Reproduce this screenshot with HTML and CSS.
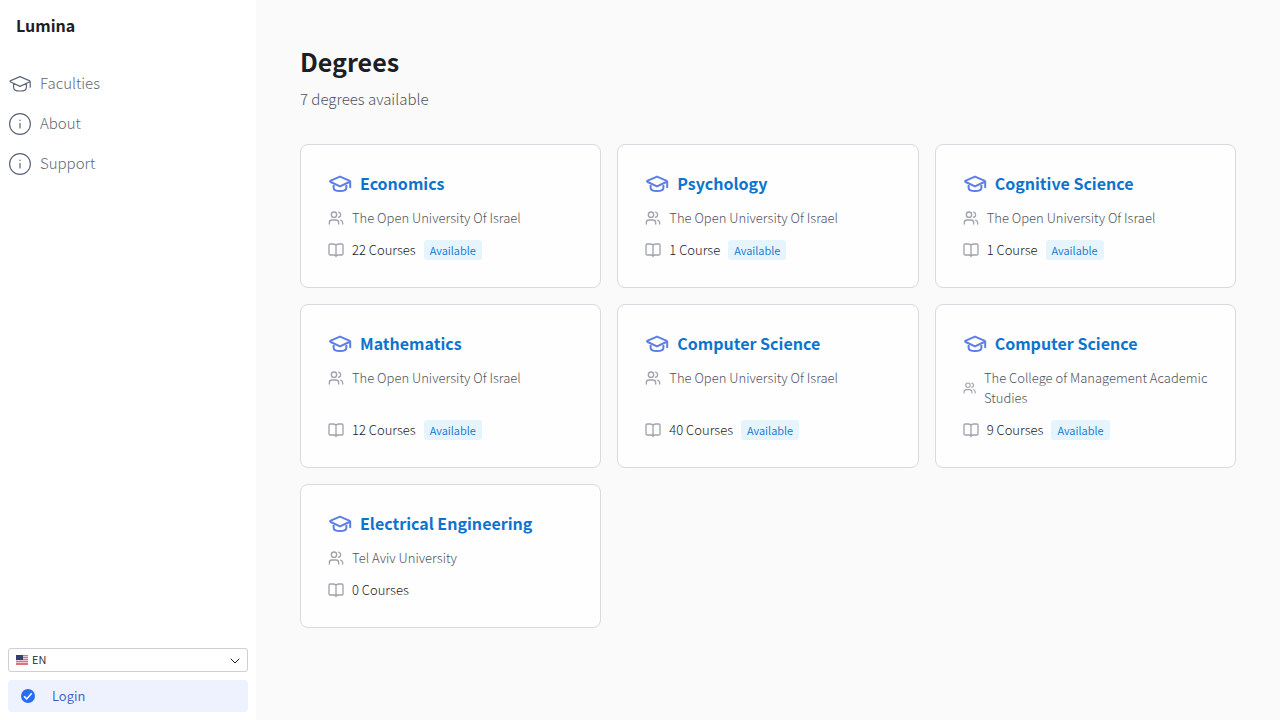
FILE: index.html
```
<!DOCTYPE html>
<html lang="en">
<head>
<meta charset="utf-8">
<meta name="viewport" content="width=device-width, initial-scale=1">
<title>Lumina - Degrees</title>
<link rel="stylesheet" href="styles.css">
</head>
<body>
<svg class="sprite" aria-hidden="true">
  <symbol id="cap" viewBox="0 0 24 24"><path d="M12 4.6 21.3 8.6Q22.6 9.3 21.3 10L12 14.4 2.7 10Q1.4 9.3 2.7 8.6ZM22.2 9.6V15.2M5.6 11.6V15.4C5.6 20.2 18.4 20.2 18.4 15.4V11.6"/></symbol>
  <symbol id="info" viewBox="0 0 24 24"><circle cx="12" cy="12" r="10.4"/><path d="M12 11.4V16M12 8v.6"/></symbol>
  <symbol id="users" viewBox="0 0 24 24"><circle cx="9" cy="7" r="4"/><path d="M16 21v-2a4 4 0 0 0-4-4H6a4 4 0 0 0-4 4v2M22 21v-2a4 4 0 0 0-3-3.87M16 3.13a4 4 0 0 1 0 7.75"/></symbol>
  <symbol id="book" viewBox="0 0 24 24"><path d="M12 5v17M12 5Q11 3 8 3H3.5Q1.5 3 1.5 5V17.5Q1.5 19.5 3.5 19.5H9Q11.5 19.5 12 21Q12.5 19.5 15 19.5H20.5Q22.5 19.5 22.5 17.5V5Q22.5 3 20.5 3H16Q13 3 12 5"/></symbol>
</svg>
<div class="layout">
  <aside class="sidebar">
    <div class="brand">Lumina</div>
    <nav class="nav" aria-label="Main">
      <a href="#faculties"><svg class="icon nav-icon"><use href="#cap"/></svg><span class="label">Faculties</span></a>
      <a href="#about"><svg class="icon nav-icon"><use href="#info"/></svg><span class="label">About</span></a>
      <a href="#support"><svg class="icon nav-icon"><use href="#info"/></svg><span class="label">Support</span></a>
    </nav>
    <div class="sidebar-footer">
      <div class="language">
        <select aria-label="Language"><option>EN</option></select>
        <svg class="flag" viewBox="0 0 12 10" aria-hidden="true"><path fill="#f0c8cc" d="M0 0h12v10H0z"/><path fill="#d9757e" d="M0 0h12v1H0zM0 2h12v1H0zM0 4h12v1H0zM0 6h12v1H0zM0 8h12v2H0z"/><path fill="#2c4270" d="M0 0h7v5H0z"/></svg>
        <svg class="chevron" viewBox="0 0 10 6" aria-hidden="true"><path d="M.7.7 5 5 9.3.7"/></svg>
      </div>
      <button class="login" type="button"><svg viewBox="0 0 16 16" aria-hidden="true"><circle cx="8" cy="8" r="7" fill="#266df0"/><path d="m4 8.2 2.7 2.7 5-5.6" fill="none" stroke="#fff" stroke-width="1.5"/></svg>Login</button>
    </div>
  </aside>
  <main class="main">
    <h1>Degrees</h1>
    <p class="summary">7 degrees available</p>
    <div class="cards">
      <article class="card">
        <h2><svg class="icon cap"><use href="#cap"/></svg><a class="label" href="#d1">Economics</a></h2>
        <p class="school"><svg class="icon small"><use href="#users"/></svg><span>The Open University Of Israel</span></p>
        <p class="courses"><svg class="icon small"><use href="#book"/></svg><span>22 Courses</span><span class="badge">Available</span></p>
      </article>
      <article class="card">
        <h2><svg class="icon cap"><use href="#cap"/></svg><a class="label" href="#d2">Psychology</a></h2>
        <p class="school"><svg class="icon small"><use href="#users"/></svg><span>The Open University Of Israel</span></p>
        <p class="courses"><svg class="icon small"><use href="#book"/></svg><span>1 Course</span><span class="badge">Available</span></p>
      </article>
      <article class="card">
        <h2><svg class="icon cap"><use href="#cap"/></svg><a class="label" href="#d3">Cognitive Science</a></h2>
        <p class="school"><svg class="icon small"><use href="#users"/></svg><span>The Open University Of Israel</span></p>
        <p class="courses"><svg class="icon small"><use href="#book"/></svg><span>1 Course</span><span class="badge">Available</span></p>
      </article>
      <article class="card">
        <h2><svg class="icon cap"><use href="#cap"/></svg><a class="label" href="#d4">Mathematics</a></h2>
        <p class="school"><svg class="icon small"><use href="#users"/></svg><span>The Open University Of Israel</span></p>
        <p class="courses"><svg class="icon small"><use href="#book"/></svg><span>12 Courses</span><span class="badge">Available</span></p>
      </article>
      <article class="card">
        <h2><svg class="icon cap"><use href="#cap"/></svg><a class="label" href="#d5">Computer Science</a></h2>
        <p class="school"><svg class="icon small"><use href="#users"/></svg><span>The Open University Of Israel</span></p>
        <p class="courses"><svg class="icon small"><use href="#book"/></svg><span>40 Courses</span><span class="badge">Available</span></p>
      </article>
      <article class="card">
        <h2><svg class="icon cap"><use href="#cap"/></svg><a class="label" href="#d6">Computer Science</a></h2>
        <p class="school"><svg class="icon small"><use href="#users"/></svg><span>The College of Management Academic Studies</span></p>
        <p class="courses"><svg class="icon small"><use href="#book"/></svg><span>9 Courses</span><span class="badge">Available</span></p>
      </article>
      <article class="card">
        <h2><svg class="icon cap"><use href="#cap"/></svg><a class="label" href="#d7">Electrical Engineering</a></h2>
        <p class="school"><svg class="icon small"><use href="#users"/></svg><span>Tel Aviv University</span></p>
        <p class="courses"><svg class="icon small"><use href="#book"/></svg><span>0 Courses</span></p>
      </article>
    </div>
  </main>
</div>
</body>
</html>
```
FILE: styles.css
```
* { box-sizing: border-box; }
body {
  margin: 0;
  background: #fafafa;
  color: #1c2024;
  font: 14px/20px "Noto Sans CJK SC", "Noto Sans CJK JP", sans-serif;
}
h1, h2, p { margin: 0; }
a { color: inherit; text-decoration: none; }
.sprite { position: absolute; width: 0; height: 0; }
.icon {
  fill: none;
  stroke: currentColor;
  stroke-width: 2;
  stroke-linecap: round;
  stroke-linejoin: round;
}
.label { padding-bottom: 2px; }
.layout { display: flex; min-height: 100vh; }
.sidebar {
  display: flex;
  flex: 0 0 256px;
  flex-direction: column;
  padding: 8px;
  background: #fff;
}
.brand { padding: 4px 8px; font-size: 16px; line-height: 26px; font-weight: 700; }
.nav { display: flex; flex-direction: column; gap: 16px; margin-top: 30px; }
.nav a {
  display: flex;
  align-items: center;
  gap: 8px;
  color: #60677a;
  font-size: 15px;
  line-height: 22px;
  font-weight: 300;
}
.nav-icon { width: 24px; height: 24px; stroke-width: 1.2; }
.sidebar-footer { display: flex; flex-direction: column; gap: 8px; margin-top: auto; }
.language { position: relative; }
.language select {
  display: block;
  width: 100%;
  height: 24px;
  padding: 0 24px 2px 23px;
  border: 1px solid #cdced6;
  border-radius: 3px;
  background: #fff;
  color: #1c2024;
  font: 350 11px/20px "Noto Sans CJK SC", sans-serif;
  appearance: none;
}
.flag, .chevron { position: absolute; pointer-events: none; }
.flag { left: 8px; top: 7px; width: 12px; height: 10px; }
.chevron { right: 8px; top: 10px; width: 10px; height: 6px; fill: none; stroke: #1c2024; }
.login {
  display: flex;
  align-items: center;
  gap: 16px;
  height: 32px;
  padding: 0 12px;
  border: 0;
  border-radius: 4px;
  background: #edf2fe;
  color: #3a5bc7;
  font: 350 13px/20px "Noto Sans CJK SC", sans-serif;
}
.login svg { width: 16px; height: 16px; }
.main { flex: 1; min-width: 0; padding: 44px; }
h1 { font-size: 25px; line-height: 34px; font-weight: 700; }
.summary { margin-top: 10px; color: #50545c; font-size: 15px; line-height: 22px; font-weight: 300; }
.cards { display: grid; grid-template-columns: repeat(3, 1fr); gap: 16px; margin-top: 34px; }
.card {
  display: flex;
  flex-direction: column;
  gap: 12px;
  padding: 27px;
  border: 1px solid #d9d9e0;
  border-radius: 8px;
  background: #fefefe;
}
.card h2, .school, .courses { display: flex; align-items: center; gap: 8px; }
.card h2 { color: #0d74ce; font-size: 16px; line-height: 22px; font-weight: 700; }
.cap { width: 24px; height: 24px; color: #5c7ee6; }
.small { width: 16px; height: 16px; color: #a0a2ad; }
.school { color: #50545c; font-size: 13px; font-weight: 300; }
.courses { margin-top: auto; font-size: 13px; font-weight: 300; }
.badge {
  padding: 0 6px;
  border-radius: 3px;
  background: #e6f4fe;
  color: #0d74ce;
  font-size: 11px;
  font-weight: 350;
}
```
